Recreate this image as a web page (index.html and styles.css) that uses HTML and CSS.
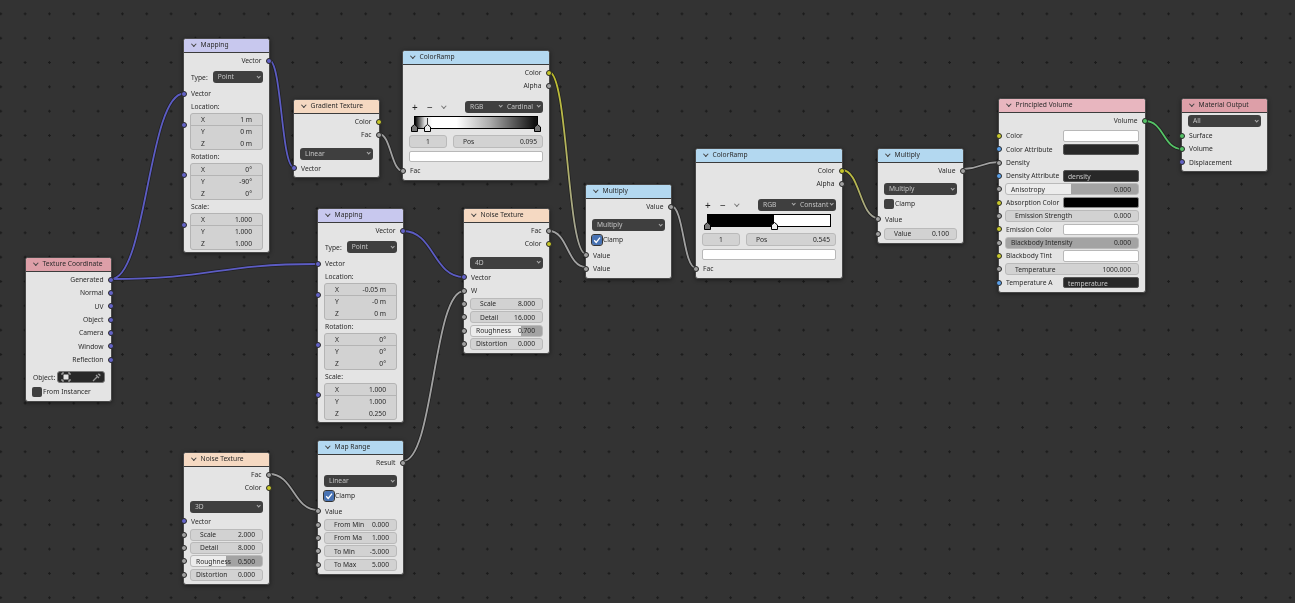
FILE: index.html
```html
<!DOCTYPE html>
<html lang="en">
<head>
    <meta charset="UTF-8">
    <title>Shader Editor</title>
    <link rel="stylesheet" href="styles.css">
</head>
<body>
<div class="canvas">

    <!-- Links between the nodes, drawn under them -->
    <svg class="wires" width="1295" height="603" viewBox="0 0 1295 603">
        <defs>
            <linearGradient id="yg1" gradientUnits="userSpaceOnUse" x1="549" y1="72" x2="586" y2="254">
                <stop offset="0" stop-color="#c0c02c"/><stop offset="1" stop-color="#a1a1a1"/>
            </linearGradient>
            <linearGradient id="yg2" gradientUnits="userSpaceOnUse" x1="842" y1="170" x2="878" y2="218">
                <stop offset="0" stop-color="#c0c02c"/><stop offset="1" stop-color="#a1a1a1"/>
            </linearGradient>
            <path id="w1" d="M111 279C147 279 148 93.5 184 93.5"/>
            <path id="w2" d="M111 279C215 279 215 264 318 264"/>
            <path id="w3" d="M269 60C282 60 281 167.5 294 167.5"/>
            <path id="w4" d="M379 134C391 134 391 171 403 171"/>
            <path id="w5" d="M549 72C568 72 567 254 586 254"/>
            <path id="w6" d="M549 231C568 231 567 267 586 267"/>
            <path id="w7" d="M403 231C434 231 433 277 464 277"/>
            <path id="w8" d="M403 461C434 461 433 291 464 291"/>
            <path id="w9" d="M269 474C294 474 293 510 318 510"/>
            <path id="w10" d="M671 206C684 206 683 268 696 268"/>
            <path id="w11" d="M842 170C860 170 860 218 878 218"/>
            <path id="w12" d="M963 169C981 169 981 162 999 162"/>
            <path id="w13" d="M1145 121C1164 121 1163 149 1182 149"/>
        </defs>
        <g class="edge">
            <use href="#w1"/><use href="#w2"/><use href="#w3"/><use href="#w4"/><use href="#w5"/>
            <use href="#w6"/><use href="#w7"/><use href="#w8"/><use href="#w9"/><use href="#w10"/>
            <use href="#w11"/><use href="#w12"/><use href="#w13"/>
        </g>
        <g class="core">
            <use href="#w1" class="c-vec"/><use href="#w2" class="c-vec"/><use href="#w3" class="c-vec"/>
            <use href="#w7" class="c-vec"/>
            <use href="#w4" class="c-val"/><use href="#w6" class="c-val"/><use href="#w8" class="c-val"/>
            <use href="#w9" class="c-val"/><use href="#w10" class="c-val"/><use href="#w12" class="c-val"/>
            <use href="#w5" stroke="url(#yg1)"/><use href="#w11" stroke="url(#yg2)"/>
            <use href="#w13" class="c-shader"/>
        </g>
    </svg>

    <!-- Texture Coordinate -->
    <div class="node n-texcoord">
        <div class="head input"><b class="chev"></b>Texture Coordinate</div>
        <div class="row out">Generated<i class="sock vec"></i></div>
        <div class="row out">Normal<i class="sock vec"></i></div>
        <div class="row out">UV<i class="sock vec"></i></div>
        <div class="row out">Object<i class="sock vec"></i></div>
        <div class="row out">Camera<i class="sock vec"></i></div>
        <div class="row out">Window<i class="sock vec"></i></div>
        <div class="row out">Reflection<i class="sock vec"></i></div>
        <div class="row mt5 obj-row">
            <span>Object:</span>
            <div class="picker">
                <svg width="10" height="10" viewBox="0 0 10 10"><rect x="2.5" y="2.5" width="5" height="5" fill="#e4e4e4"/><path d="M1 3V1H3M7 1H9V3M9 7V9H7M3 9H1V7" fill="none" stroke="#ddd" stroke-width=".8"/></svg>
                <svg width="9" height="9" viewBox="0 0 9 9"><path d="M1 8L5 4M4 2L7 5M6 1.5C7 .5 8.5 2 7.5 3" fill="none" stroke="#999" stroke-width="1.3"/></svg>
            </div>
        </div>
        <div class="row mt2 check-row"><b class="check"></b>From Instancer</div>
    </div>

    <!-- First Mapping -->
    <div class="node n-map1">
        <div class="head vector"><b class="chev"></b>Mapping</div>
        <div class="row out">Vector<i class="sock vec"></i></div>
        <div class="row type-row mt4"><span>Type:</span><div class="select short">Point</div></div>
        <div class="row mt4"><i class="sock in vec"></i>Vector</div>
        <div class="label first">Location:</div>
        <div class="row tall"><i class="sock in vec"></i>
            <div class="stack"><div><span>X</span><span>1 m</span></div><div><span>Y</span><span>0 m</span></div><div><span>Z</span><span>0 m</span></div></div>
        </div>
        <div class="label">Rotation:</div>
        <div class="row tall"><i class="sock in vec"></i>
            <div class="stack"><div><span>X</span><span>0°</span></div><div><span>Y</span><span>-90°</span></div><div><span>Z</span><span>0°</span></div></div>
        </div>
        <div class="label">Scale:</div>
        <div class="row tall"><i class="sock in vec"></i>
            <div class="stack"><div><span>X</span><span>1.000</span></div><div><span>Y</span><span>1.000</span></div><div><span>Z</span><span>1.000</span></div></div>
        </div>
    </div>

    <!-- Gradient Texture -->
    <div class="node n-gradient">
        <div class="head texture"><b class="chev"></b>Gradient Texture</div>
        <div class="row out">Color<i class="sock col"></i></div>
        <div class="row out">Fac<i class="sock val"></i></div>
        <div class="pad mt6"><div class="select">Linear</div></div>
        <div class="row mt2"><i class="sock in vec"></i>Vector</div>
    </div>

    <!-- First ColorRamp -->
    <div class="node wide n-ramp1">
        <div class="head conv"><b class="chev"></b>ColorRamp</div>
        <div class="row out">Color<i class="sock col"></i></div>
        <div class="row out">Alpha<i class="sock val"></i></div>
        <div class="tools mt8">
            <span class="tool">+</span><span class="tool">−</span><b class="chev tool-chev"></b>
            <div class="select split"><span>RGB</span><span>Cardinal</span></div>
        </div>
        <div class="ramp ramp-cardinal">
            <svg class="stop s0" width="7" height="8" viewBox="0 0 7 8"><use href="#stop-shape"/></svg>
            <b class="tick t1"></b>
            <svg class="stop s1 sel" width="7" height="8" viewBox="0 0 7 8"><path id="stop-shape" d="M.5 7.5V3L3.5 .5 6.5 3V7.5Z"/></svg>
            <svg class="stop s2" width="7" height="8" viewBox="0 0 7 8"><use href="#stop-shape"/></svg>
        </div>
        <div class="ramp-fields"><div class="field index">1</div><div class="field pos"><span>Pos</span><span>0.095</span></div></div>
        <div class="pad mt3"><div class="swatch white"></div></div>
        <div class="row mt2"><i class="sock in val"></i>Fac</div>
    </div>

    <!-- Second Mapping -->
    <div class="node n-map2">
        <div class="head vector"><b class="chev"></b>Mapping</div>
        <div class="row out">Vector<i class="sock vec"></i></div>
        <div class="row type-row mt4"><span>Type:</span><div class="select short">Point</div></div>
        <div class="row mt4"><i class="sock in vec"></i>Vector</div>
        <div class="label first">Location:</div>
        <div class="row tall"><i class="sock in vec"></i>
            <div class="stack"><div><span>X</span><span>-0.05 m</span></div><div><span>Y</span><span>-0 m</span></div><div><span>Z</span><span>0 m</span></div></div>
        </div>
        <div class="label">Rotation:</div>
        <div class="row tall"><i class="sock in vec"></i>
            <div class="stack"><div><span>X</span><span>0°</span></div><div><span>Y</span><span>0°</span></div><div><span>Z</span><span>0°</span></div></div>
        </div>
        <div class="label">Scale:</div>
        <div class="row tall"><i class="sock in vec"></i>
            <div class="stack"><div><span>X</span><span>1.000</span></div><div><span>Y</span><span>1.000</span></div><div><span>Z</span><span>0.250</span></div></div>
        </div>
    </div>

    <!-- Noise Texture, 4D -->
    <div class="node n-noise1">
        <div class="head texture"><b class="chev"></b>Noise Texture</div>
        <div class="row out">Fac<i class="sock val"></i></div>
        <div class="row out">Color<i class="sock col"></i></div>
        <div class="pad mt6"><div class="select">4D</div></div>
        <div class="row mt2"><i class="sock in vec"></i>Vector</div>
        <div class="row"><i class="sock in val"></i>W</div>
        <div class="row"><i class="sock in val"></i><div class="field"><span>Scale</span><span>8.000</span></div></div>
        <div class="row"><i class="sock in val"></i><div class="field"><span>Detail</span><span>16.000</span></div></div>
        <div class="row"><i class="sock in val"></i><div class="field slider tight" style="--fill:70%"><span>Roughness</span><span>0.700</span></div></div>
        <div class="row"><i class="sock in val"></i><div class="field tight"><span>Distortion</span><span>0.000</span></div></div>
    </div>

    <!-- Map Range -->
    <div class="node n-range">
        <div class="head conv"><b class="chev"></b>Map Range</div>
        <div class="row out">Result<i class="sock val"></i></div>
        <div class="pad mt6"><div class="select">Linear</div></div>
        <div class="row mt2 check-row"><b class="check on"><svg width="10" height="10" viewBox="0 0 10 10"><path d="M2.2 5.2L4.2 7.4 8 2.6" fill="none" stroke="#fff" stroke-width="1.3"/></svg></b>Clamp</div>
        <div class="row mt2"><i class="sock in val"></i>Value</div>
        <div class="row"><i class="sock in val"></i><div class="field"><span>From Min</span><span>0.000</span></div></div>
        <div class="row"><i class="sock in val"></i><div class="field"><span>From Ma</span><span>1.000</span></div></div>
        <div class="row"><i class="sock in val"></i><div class="field"><span>To Min</span><span>-5.000</span></div></div>
        <div class="row"><i class="sock in val"></i><div class="field"><span>To Max</span><span>5.000</span></div></div>
    </div>

    <!-- Noise Texture, 3D -->
    <div class="node n-noise2">
        <div class="head texture"><b class="chev"></b>Noise Texture</div>
        <div class="row out">Fac<i class="sock val"></i></div>
        <div class="row out">Color<i class="sock col"></i></div>
        <div class="pad mt6"><div class="select">3D</div></div>
        <div class="row mt2"><i class="sock in vec"></i>Vector</div>
        <div class="row"><i class="sock in val"></i><div class="field"><span>Scale</span><span>2.000</span></div></div>
        <div class="row"><i class="sock in val"></i><div class="field"><span>Detail</span><span>8.000</span></div></div>
        <div class="row"><i class="sock in val"></i><div class="field slider tight" style="--fill:50%"><span>Roughness</span><span>0.500</span></div></div>
        <div class="row"><i class="sock in val"></i><div class="field tight"><span>Distortion</span><span>0.000</span></div></div>
    </div>

    <!-- First Multiply -->
    <div class="node n-mult1">
        <div class="head conv"><b class="chev"></b>Multiply</div>
        <div class="row out">Value<i class="sock val"></i></div>
        <div class="pad mt6"><div class="select">Multiply</div></div>
        <div class="row mt2 check-row"><b class="check on"><svg width="10" height="10" viewBox="0 0 10 10"><path d="M2.2 5.2L4.2 7.4 8 2.6" fill="none" stroke="#fff" stroke-width="1.3"/></svg></b>Clamp</div>
        <div class="row mt2"><i class="sock in val"></i>Value</div>
        <div class="row"><i class="sock in val"></i>Value</div>
    </div>

    <!-- Second ColorRamp -->
    <div class="node wide n-ramp2">
        <div class="head conv"><b class="chev"></b>ColorRamp</div>
        <div class="row out">Color<i class="sock col"></i></div>
        <div class="row out">Alpha<i class="sock val"></i></div>
        <div class="tools mt8">
            <span class="tool">+</span><span class="tool">−</span><b class="chev tool-chev"></b>
            <div class="select split"><span>RGB</span><span>Constant</span></div>
        </div>
        <div class="ramp ramp-constant">
            <svg class="stop s0" width="7" height="8" viewBox="0 0 7 8"><use href="#stop-shape"/></svg>
            <svg class="stop s3 sel" width="7" height="8" viewBox="0 0 7 8"><use href="#stop-shape"/></svg>
        </div>
        <div class="ramp-fields"><div class="field index">1</div><div class="field pos"><span>Pos</span><span>0.545</span></div></div>
        <div class="pad mt3"><div class="swatch white"></div></div>
        <div class="row mt2"><i class="sock in val"></i>Fac</div>
    </div>

    <!-- Second Multiply -->
    <div class="node n-mult2">
        <div class="head conv"><b class="chev"></b>Multiply</div>
        <div class="row out">Value<i class="sock val"></i></div>
        <div class="pad mt6"><div class="select">Multiply</div></div>
        <div class="row mt2 check-row"><b class="check"></b>Clamp</div>
        <div class="row mt2"><i class="sock in val"></i>Value</div>
        <div class="row mt1"><i class="sock in val"></i><div class="field"><span>Value</span><span>0.100</span></div></div>
    </div>

    <!-- Principled Volume -->
    <div class="node wide n-volume">
        <div class="head input-soft"><b class="chev"></b>Principled Volume</div>
        <div class="row out">Volume<i class="sock shader"></i></div>
        <div class="row mt2"><i class="sock in col"></i>Color<div class="swatch white side"></div></div>
        <div class="row"><i class="sock in str"></i>Color Attribute<div class="swatch dark side"></div></div>
        <div class="row"><i class="sock in val"></i>Density</div>
        <div class="row"><i class="sock in str"></i>Density Attribute<div class="swatch dark side">density</div></div>
        <div class="row"><i class="sock in val"></i><div class="field slider tight" style="--fill:49%"><span>Anisotropy</span><span>0.000</span></div></div>
        <div class="row"><i class="sock in col"></i>Absorption Color<div class="swatch black side"></div></div>
        <div class="row"><i class="sock in val"></i><div class="field"><span>Emission Strength</span><span>0.000</span></div></div>
        <div class="row"><i class="sock in col"></i>Emission Color<div class="swatch white side"></div></div>
        <div class="row"><i class="sock in val"></i><div class="field slider tight" style="--fill:0%"><span>Blackbody Intensity</span><span>0.000</span></div></div>
        <div class="row"><i class="sock in col"></i>Blackbody Tint<div class="swatch white side"></div></div>
        <div class="row"><i class="sock in val"></i><div class="field"><span>Temperature</span><span>1000.000</span></div></div>
        <div class="row"><i class="sock in str"></i>Temperature A<div class="swatch dark side">temperature</div></div>
    </div>

    <!-- Material Output -->
    <div class="node n-output">
        <div class="head input"><b class="chev"></b>Material Output</div>
        <div class="pad mt2"><div class="select">All</div></div>
        <div class="row mt2"><i class="sock in shader"></i>Surface</div>
        <div class="row"><i class="sock in shader"></i>Volume</div>
        <div class="row"><i class="sock in vec"></i>Displacement</div>
    </div>

</div>
</body>
</html>
```

FILE: styles.css
```css
html, body {
    margin: 0;
    height: 100%;
    overflow: hidden;
    background-color: #333;
}
.canvas {
    position: relative;
    width: 1295px;
    height: 603px;
    overflow: hidden;
    font-family: "Noto Sans", sans-serif;
    font-size: 6.7px;
    color: #2a2a2a;
    background-color: #333;
    background-image: radial-gradient(circle at center, #1b1b1b 1px, transparent 1.4px);
    background-size: 24.33px 24.33px;
    background-position: -11.4px 1.7px;
    filter: blur(0.35px);
}

/* wires */
.wires {
    position: absolute;
    left: 0;
    top: 0;
}
.edge, .core {
    fill: none;
}
.edge {
    stroke: #1e1e1e;
    stroke-width: 3.4;
    opacity: 0.85;
}
.core {
    stroke-width: 1.8;
}
.c-vec { stroke: #5c5cc4; }
.c-val { stroke: #a1a1a1; }
.c-shader { stroke: #55c266; }

/* nodes */
.node {
    position: absolute;
    box-sizing: border-box;
    width: 87px;
    padding-bottom: 2.5px;
    background-color: #e4e4e4;
    border: 1px solid #484848;
    border-radius: 3px;
    box-shadow: 0 1px 4px rgba(0, 0, 0, 0.45);
}
.wide { width: 148px; }

.n-texcoord { left: 25px; top: 257px; }
.n-map1 { left: 183px; top: 38px; }
.n-gradient { left: 293px; top: 99px; }
.n-ramp1 { left: 402px; top: 50px; }
.n-map2 { left: 317px; top: 208px; }
.n-noise1 { left: 463px; top: 208px; }
.n-range { left: 317px; top: 440px; }
.n-noise2 { left: 183px; top: 452px; }
.n-mult1 { left: 585px; top: 184px; }
.n-ramp2 { left: 695px; top: 148px; }
.n-mult2 { left: 877px; top: 148px; }
.n-volume { left: 998px; top: 98px; }
.n-output { left: 1181px; top: 98px; }

.head {
    display: flex;
    align-items: center;
    gap: 4px;
    box-sizing: border-box;
    height: 14px;
    margin-bottom: 1px;
    padding: 0 0 2px 7px;
    border-bottom: 1px solid #3c3c3c;
    border-radius: 2px 2px 0 0;
}
.input { background-color: #dd9fa8; }
.input-soft { background-color: #e8b6bf; }
.vector { background-color: #c8c8ee; }
.texture { background-color: #f5d9c2; }
.conv { background-color: #b3d8f0; }

.chev {
    display: inline-block;
    width: 2.6px;
    height: 2.6px;
    margin: -2px 1px 0;
    border-right: 0.8px solid #444;
    border-bottom: 0.8px solid #444;
    transform: rotate(45deg);
}

/* rows */
.row {
    position: relative;
    display: flex;
    align-items: center;
    height: 13.33px;
    padding: 0 6px 0 7px;
}
.out { justify-content: flex-end; padding-right: 7.5px; }
.tall { height: 37px; align-items: stretch; }
.tall .sock { top: 12px; }
.pad { padding: 0 6px; }
.label {
    display: flex;
    align-items: center;
    height: 13px;
    padding: 0 7px;
}
.first { height: 12px; }
.row > .field, .row > .stack { margin-left: -1px; }
.mt1 { margin-top: 1px; }
.mt2 { margin-top: 2px; }
.mt3 { margin-top: 3px; }
.mt4 { margin-top: 4px; }
.mt5 { margin-top: 5px; }
.mt6 { margin-top: 6px; }
.mt8 { margin-top: 8px; }

/* sockets */
.sock {
    position: absolute;
    top: 50%;
    right: -3px;
    box-sizing: border-box;
    width: 6px;
    height: 6px;
    margin-top: -3px;
    border: 1px solid #2a2a2a;
    border-radius: 50%;
}
.sock.in { left: -3px; right: auto; }
.vec { background-color: #6363c7; }
.val { background-color: #a1a1a1; }
.col { background-color: #c7c729; }
.str { background-color: #5a9fe8; }
.shader { background-color: #55c266; }

/* controls */
.select {
    position: relative;
    box-sizing: border-box;
    height: 12px;
    line-height: 12px;
    padding: 0 5px;
    color: #c4c4c4;
    background-color: #3f3f3f;
    border-radius: 3px;
}
.select::after, .split span::after {
    content: "";
    position: absolute;
    top: 3.5px;
    right: 3px;
    width: 2.4px;
    height: 2.4px;
    border-right: 0.7px solid #aaa;
    border-bottom: 0.7px solid #aaa;
    transform: rotate(45deg);
}
.short { flex: 1; margin-left: 5px; }
.type-row { height: 12px; }

.stack {
    flex: 1;
    display: flex;
    flex-direction: column;
    background-color: #b4b4b4;
    border: 0.5px solid #b4b4b4;
    border-radius: 3px;
    overflow: hidden;
}
.stack div {
    flex: 1;
    display: flex;
    justify-content: space-between;
    align-items: center;
    margin-bottom: 0.6px;
    padding: 0 10px;
    background-color: #d2d2d2;
}
.stack div:last-child { margin-bottom: 0; }

.field {
    flex: 1;
    display: flex;
    justify-content: space-between;
    align-items: center;
    box-sizing: border-box;
    height: 12px;
    padding: 0 7px 0 9px;
    white-space: nowrap;
    background-color: #d2d2d2;
    border: 1px solid #bababa;
    border-radius: 3px;
}
.tight { padding: 0 7px 0 5px; }
.slider {
    background: linear-gradient(to right, #ececec var(--fill), #a3a3a3 var(--fill));
}

.swatch {
    box-sizing: border-box;
    height: 11.5px;
    line-height: 11.5px;
    padding: 0 4px;
    border: 1px solid #b8b8b8;
    border-radius: 2px;
}
.side {
    width: 76px;
    margin-left: auto;
}
.white { background-color: #fff; }
.black { background-color: #000; border-color: #888; }
.dark { background-color: #282828; border-color: #555; color: #c8c8c8; }

.check {
    display: block;
    box-sizing: border-box;
    width: 10px;
    height: 10px;
    margin-right: 1px;
    background-color: #3f3f3f;
    border-radius: 2px;
}
.check.on {
    background-color: #4772b3;
    border: 0;
    outline: 0.5px solid #333;
}
.check svg { display: block; }
.check-row { padding-left: 6px; }

.obj-row { height: 12px; justify-content: flex-end; gap: 2px; }
.picker {
    display: flex;
    justify-content: space-between;
    align-items: center;
    box-sizing: border-box;
    width: 48px;
    height: 12px;
    padding: 0 3px;
    background-color: #282828;
    border: 1px solid #777;
    border-radius: 3px;
}
.picker svg { display: block; }

/* color ramp */
.tools {
    display: flex;
    align-items: center;
    height: 12px;
    padding: 0 6px;
}
.tool {
    width: 15px;
    padding-left: 3px;
    box-sizing: border-box;
    font-size: 10px;
    line-height: 12px;
    color: #222;
}
.tool-chev { margin: -2px 0 0 3px; border-color: #777; }
.split {
    display: flex;
    gap: 12px;
    margin-left: auto;
    width: 78px;
    padding: 0 5px;
}
.split::after { display: none; }
.split span { flex: 0 0 auto; }
.split span:first-child { width: 25px; position: relative; }
.split span:first-child::after { right: -7px; }

.ramp {
    position: relative;
    box-sizing: border-box;
    height: 13px;
    margin: 3px 11px 0;
    border: 1px solid #000;
}
.ramp-cardinal {
    background: linear-gradient(to right, #000 0%, #ddd 8%, #fff 14%, #fff 34%, #aaa 62%, #555 82%, #111 98%);
}
.ramp-constant {
    background: linear-gradient(to right, #000 54.5%, #fff 54.5%);
}
.stop {
    position: absolute;
    top: 7px;
    display: block;
    fill: #777;
    stroke: #000;
    stroke-width: 1;
}
.stop.sel { fill: #eee; }
.s0 { left: -4px; }
.s1 { left: 8.5px; }
.s2 { right: -4px; }
.s3 { left: 63px; }
.tick {
    position: absolute;
    top: 1px;
    left: 11.5px;
    height: 6px;
    border-left: 1px dashed #333;
}

.ramp-fields {
    display: flex;
    gap: 6px;
    margin-top: 6px;
    padding: 0 6px;
}
.index {
    flex: 0 0 38px;
    justify-content: center;
    padding: 0;
}
.pos { height: 13px; padding: 0 5px 0 9px; }
.index { height: 13px; }
```
